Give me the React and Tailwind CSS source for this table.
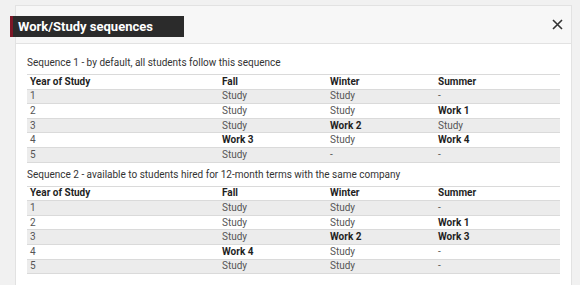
import React from 'react';

const seq1 = [
    ['1', 'Study', 'Study', '-'],
    ['2', 'Study', 'Study', '*Work 1'],
    ['3', 'Study', '*Work 2', 'Study'],
    ['4', '*Work 3', 'Study', '*Work 4'],
    ['5', 'Study', '-', '-'],
];

const seq2 = [
    ['1', 'Study', 'Study', '-'],
    ['2', 'Study', 'Study', '*Work 1'],
    ['3', 'Study', '*Work 2', '*Work 3'],
    ['4', '*Work 4', 'Study', '-'],
    ['5', 'Study', 'Study', '-'],
];

const Cell = ({ value }) => {
    const bold = value.startsWith('*');
    return (
        <div className={`pl-[3px] ${bold ? 'font-bold text-[#1f1f1f]' : 'text-[#555]'}`}>
            {bold ? value.slice(1) : value}
        </div>
    );
};

const SequenceTable = ({ rows }) => (
    <div className="mt-[5px] border-b border-[#dadada]">
        <div className="grid grid-cols-[192px_108px_108px_1fr] h-[14.6px] items-center border-t border-[#dadada] font-bold text-[#1f1f1f]">
            <div className="pl-[3px]">Year of Study</div>
            <div className="pl-[3px]">Fall</div>
            <div className="pl-[3px]">Winter</div>
            <div className="pl-[3px]">Summer</div>
        </div>
        {rows.map((row, i) => (
            <div
                key={i}
                className={`grid grid-cols-[192px_108px_108px_1fr] h-[14.6px] items-center border-t border-[#dadada] ${i % 2 === 0 ? 'bg-[#ececec]' : 'bg-white'}`}
            >
                {row.map((v, j) => <Cell key={j} value={v} />)}
            </div>
        ))}
    </div>
);

const App = () => {
    return (
        <div className="w-[580px] h-[285px] overflow-hidden bg-[#f1f1f1] pt-[5px] pl-[15px] pr-[8px] font-['Roboto',sans-serif] text-[10px] leading-[12px]">
            <div className="bg-white border border-[#e2e2e2] h-[300px]">
                <div className="h-[38px] bg-[#f7f7f7] border-b border-[#e2e2e2] flex items-center justify-between">
                    <div className="-ml-[6px] mt-[3px] w-[174px] h-[21px] bg-[#2b2b2b] border-l-[3px] border-[#7d1626] flex items-center pl-[5px]">
                        <span className="text-white font-bold text-[13px] leading-none">Work/Study sequences</span>
                    </div>
                    <svg className="mr-[8px]" width="11" height="11" viewBox="0 0 11 11">
                        <path d="M1 1 L10 10 M10 1 L1 10" stroke="#333" strokeWidth="1.6" />
                    </svg>
                </div>
                <div className="px-[11px] pt-[13px]">
                    <div className="text-[#333]">Sequence 1 - by default, all students follow this sequence</div>
                    <SequenceTable rows={seq1} />
                    <div className="mt-[6px] text-[#333]">Sequence 2 - available to students hired for 12-month terms with the same company</div>
                    <SequenceTable rows={seq2} />
                </div>
            </div>
        </div>
    );
};

export default App;
